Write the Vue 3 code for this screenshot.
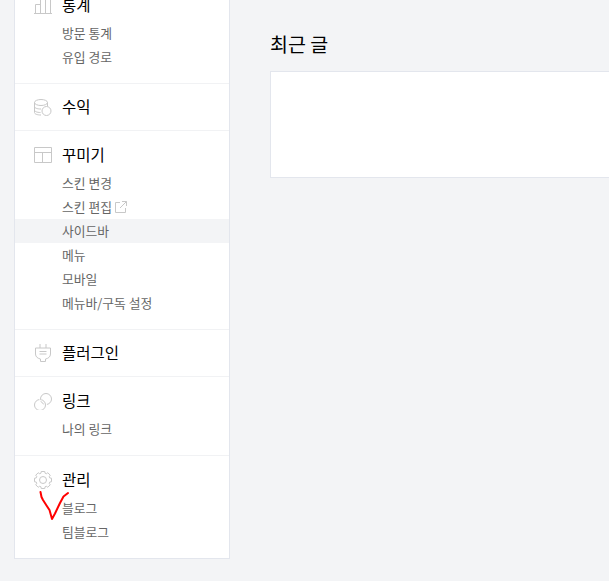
<script setup>
const sections = [
  { key: 'stats', title: '통계', items: [{ label: '방문 통계' }, { label: '유입 경로' }] },
  { key: 'revenue', title: '수익', items: [] },
  {
    key: 'design',
    title: '꾸미기',
    items: [
      { label: '스킨 변경' },
      { label: '스킨 편집', external: true },
      { label: '사이드바', active: true },
      { label: '메뉴' },
      { label: '모바일' },
      { label: '메뉴바/구독 설정' },
    ],
  },
  { key: 'plugin', title: '플러그인', items: [] },
  { key: 'link', title: '링크', items: [{ label: '나의 링크' }] },
  { key: 'admin', title: '관리', items: [{ label: '블로그' }, { label: '팀블로그' }] },
]

// Eight-toothed gear outline, built from alternating outer and inner radii.
const gearPath = (() => {
  const pts = []
  for (let i = 0; i < 8; i++) {
    const a = (i * Math.PI) / 4
    for (const [off, r] of [[-0.2, 8.7], [0.2, 8.7], [0.3, 7.1], [0.49, 7.1]]) {
      const t = a + off - Math.PI / 2
      pts.push(`${(9 + r * Math.cos(t)).toFixed(2)} ${(9 + r * Math.sin(t)).toFixed(2)}`)
    }
  }
  return `M${pts.join('L')}Z`
})()
</script>

<template>
  <div class="page">
    <aside class="sidebar">
      <section v-for="s in sections" :key="s.key" class="section" :class="{ 'has-items': s.items.length }">
        <div class="head">
          <svg class="icon" width="18" height="18" viewBox="0 0 18 18" fill="none" stroke="#c8c8c8">
            <template v-if="s.key === 'stats'">
              <path d="M0 17.500H18M1.500 17.500V8.500H6.500V17.500M6.500 17.500V2.500H11.500V17.500M11.500 17.500V2.500H16.500V17.500" />
            </template>
            <template v-else-if="s.key === 'revenue'">
              <ellipse cx="7" cy="4.500" rx="6.500" ry="3" />
              <path d="M.5 4.500V14.500C.5 16 3 17 7 17M.5 8.500C.5 10 3 11 7 11M.5 12C.5 13.500 3 14.500 6.500 14.500M13.500 4.500V8" />
              <circle cx="12.500" cy="13" r="4.500" fill="#fff" />
            </template>
            <template v-else-if="s.key === 'design'">
              <path d="M.5 1.500H17.500V16.500H.5ZM.5 6.500H17.500M8.500 6.500V16.500" />
            </template>
            <template v-else-if="s.key === 'plugin'">
              <path d="M6 0V4M12 0V4M1.500 4H16.500V10C16.500 13 14 14.500 11.500 15V17.500H6.500V15C4 14.500 1.500 13 1.500 10ZM5.500 7.500H12.500M5.500 10H12.500" />
            </template>
            <template v-else-if="s.key === 'link'">
              <circle cx="12" cy="7" r="5.500" />
              <circle cx="6" cy="13" r="5.500" stroke="#fff" stroke-width="3" />
              <circle cx="6" cy="13" r="5.500" />
              <path d="M6.500 7.500A5.500 5.500 0 0 1 8 3" stroke="#fff" stroke-width="3" />
              <path d="M6.530 7.530A5.500 5.500 0 0 1 8.100 3.100" />
            </template>
            <template v-else>
              <path :d="gearPath" stroke-linejoin="round" />
              <circle cx="9" cy="9" r="3.500" />
            </template>
          </svg>
          <span class="title">{{ s.title }}</span>
        </div>
        <ul v-if="s.items.length" class="items">
          <li v-for="item in s.items" :key="item.label" class="item" :class="{ active: item.active }">
            {{ item.label }}
            <svg v-if="item.external" class="ext" width="12" height="12" viewBox="0 0 12 12" fill="none" stroke="#c8c8c8">
              <path d="M5 1.500H.5V11.500H10.500V7M7 .5H11.500V5M11.500 .5L5 7" />
            </svg>
          </li>
        </ul>
      </section>
    </aside>

    <main class="main">
      <h2 class="heading">최근 글</h2>
      <div class="panel"></div>
    </main>

    <svg class="scribble" width="609" height="581" viewBox="0 0 609 581" fill="none">
      <path d="M40.500 492L41.500 497L43 500L46.500 505.500L49.500 510L52 519L55 513.500L60 503L63.500 496.500L68 493" stroke="#f00" stroke-width="2" stroke-linecap="round" stroke-linejoin="round" />
    </svg>
  </div>
</template>

<style>
html, body { margin: 0; background: #f3f4f6; overflow: hidden; }
</style>

<style scoped>
.page {
  position: relative;
  display: flex;
  align-items: flex-start;
  width: 609px;
  height: 581px;
  overflow: hidden;
  background: #f3f4f6;
  font-family: "Noto Sans CJK KR", sans-serif;
}
.sidebar {
  flex: none;
  box-sizing: border-box;
  width: 216px;
  margin: -20px 0 0 14px;
  background: #fff;
  border: 1px solid #e3e6ed;
}
.section {
  padding: 11px 0;
  border-bottom: 1px solid #f1f2f4;
}
.section:last-child { border-bottom: 0; }
.section.has-items { padding: 12px 0 14px; }
.head {
  display: flex;
  align-items: center;
  gap: 10px;
  height: 24px;
  padding-left: 19px;
}
.icon { flex: none; }
.title {
  padding-bottom: 2px;
  font-size: 15.500px;
  color: #000;
  line-height: 24px;
}
.items {
  list-style: none;
  margin: 4px 0 0;
  padding: 0;
}
.item {
  display: flex;
  align-items: center;
  gap: 3px;
  box-sizing: border-box;
  height: 24px;
  padding: 0 0 2px 47px;
  font-size: 12.800px;
  color: #666;
}
.ext { margin-top: 2px; }
.item.active { background: #f3f4f6; }
.main {
  flex: none;
  width: 500px;
  margin-left: 40px;
  padding-top: 30px;
}
.heading {
  margin: 0 0 13px;
  font-size: 19.500px;
  font-weight: 400;
  line-height: 28px;
  color: #000;
}
.panel {
  box-sizing: border-box;
  height: 107px;
  background: #fff;
  border: 1px solid #e3e6ed;
}
.scribble {
  position: absolute;
  top: 0;
  left: 0;
  pointer-events: none;
}
</style>
